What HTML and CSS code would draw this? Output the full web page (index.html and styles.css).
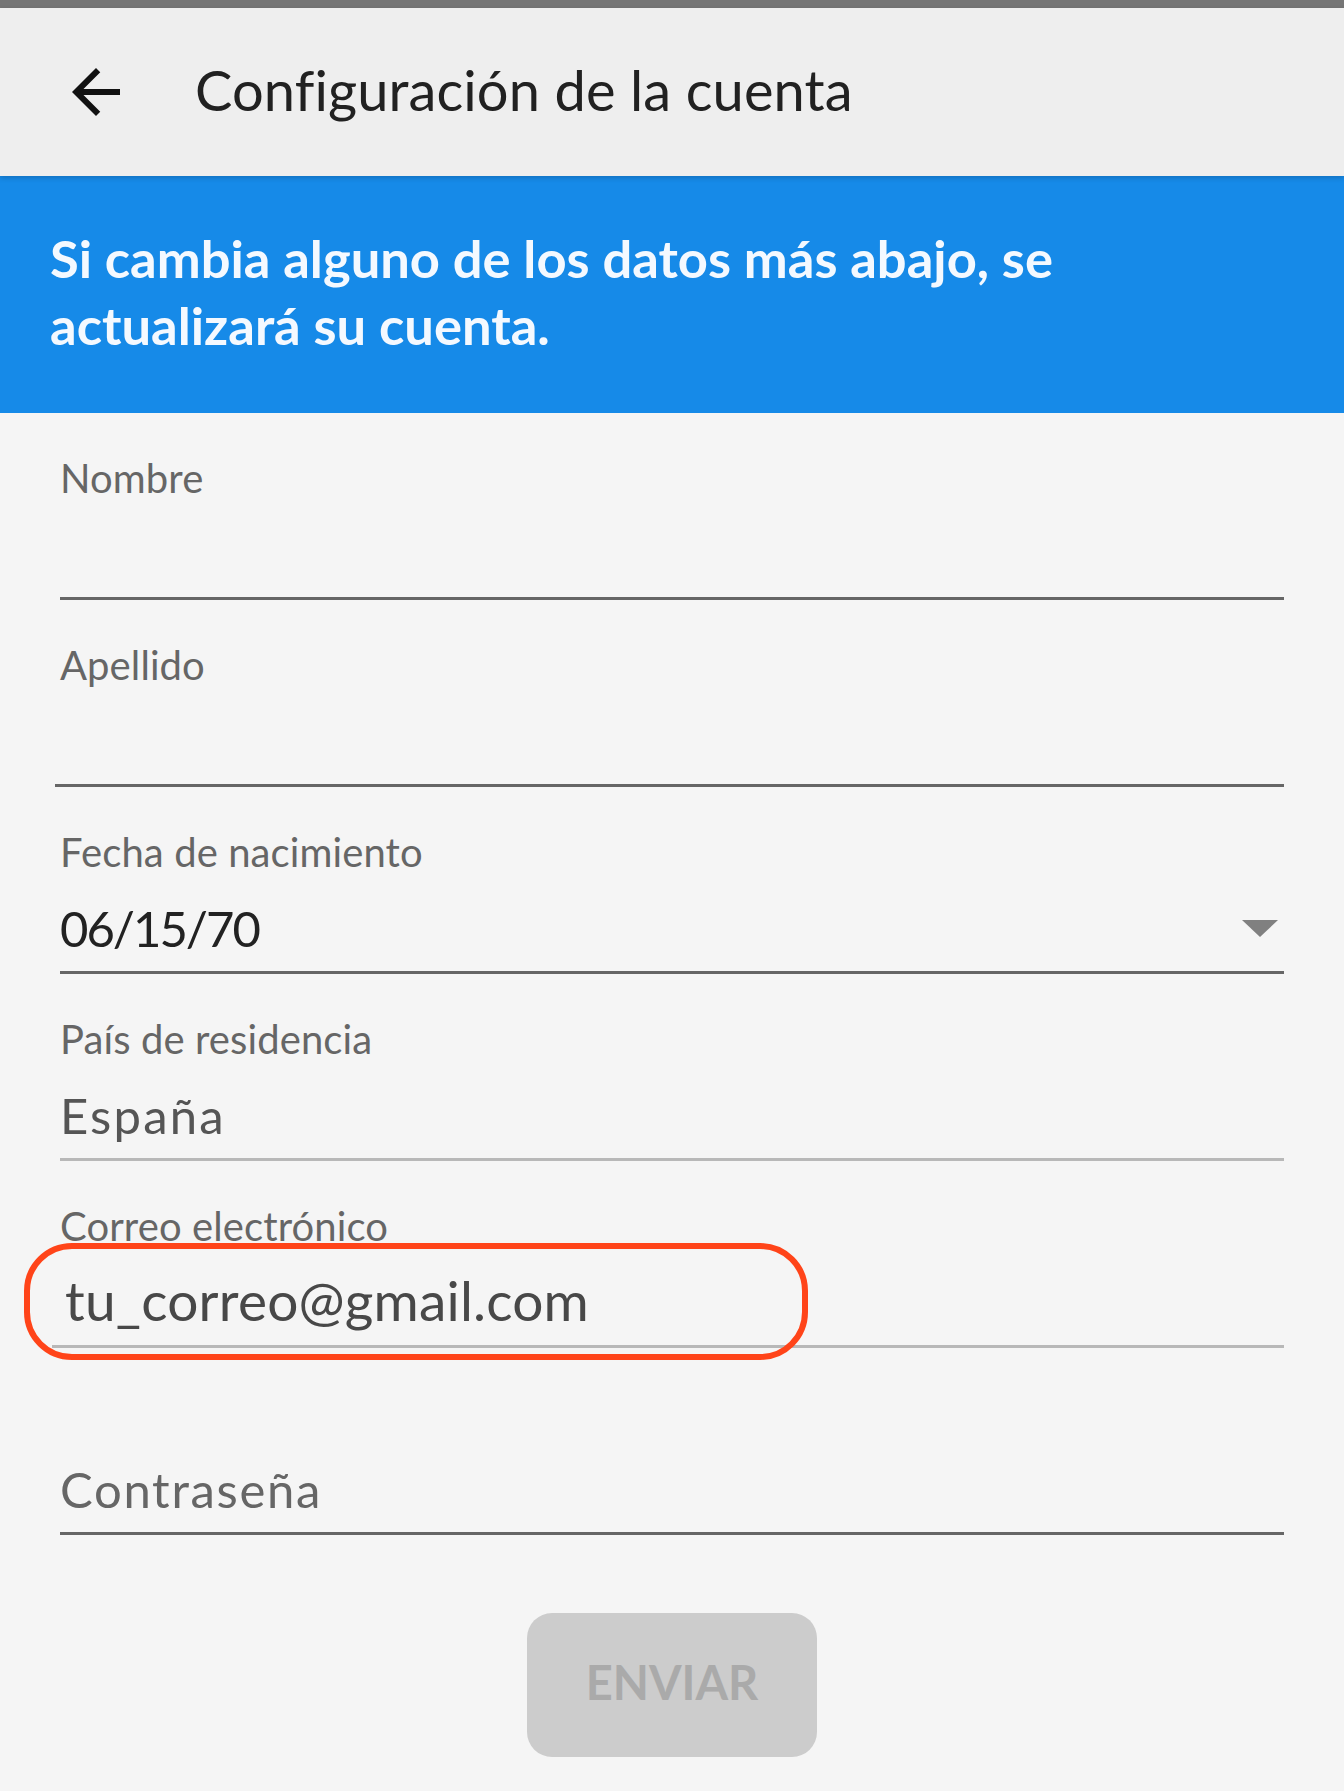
FILE: index.html
```html
<!DOCTYPE html>
<html lang="es">
<head>
  <meta charset="UTF-8">
  <meta name="viewport" content="width=device-width, initial-scale=1.0">
  <title>Configuración de la cuenta</title>
  <link rel="stylesheet" href="styles.css">
</head>
<body>

  <div class="status-strip"></div>

  <div class="app-bar">
    <a href="#" class="back-btn" aria-label="Volver">
      <svg viewBox="0 0 24 24" width="72" height="72">
        <path d="M20 11H7.83l5.59-5.59L12 4l-8 8 8 8 1.41-1.41L7.83 13H20v-2z"/>
      </svg>
    </a>
    <h1 class="app-title">Configuración de la cuenta</h1>
  </div>

  <div class="notice">
    Si cambia alguno de los datos más abajo, se actualizará su cuenta.
  </div>

  <form class="account-form">
    <div class="field">
      <label class="field-label">Nombre</label>
      <div class="field-value"></div>
    </div>

    <div class="field field--wide">
      <label class="field-label">Apellido</label>
      <div class="field-value"></div>
    </div>

    <div class="field">
      <label class="field-label">Fecha de nacimiento</label>
      <div class="field-value field-value--date">
        <span class="date-text">06/15/70</span>
        <span class="dropdown-arrow"></span>
      </div>
    </div>

    <div class="field field--light">
      <label class="field-label">País de residencia</label>
      <div class="field-value field-value--muted">España</div>
    </div>

    <div class="field field--light field--email">
      <label class="field-label">Correo electrónico</label>
      <div class="field-value field-value--email">tu_correo@gmail.com</div>
      <!-- highlight drawn around the email -->
      <div class="highlight"></div>
    </div>

    <div class="field">
      <label class="field-label">&nbsp;</label>
      <div class="field-value field-value--placeholder">Contraseña</div>
    </div>

    <div class="actions">
      <button type="button" class="send-btn" disabled>ENVIAR</button>
    </div>
  </form>

</body>
</html>
```

FILE: styles.css
```css
html {
  background: #f5f5f5;
}

body {
  margin: 0;
  font-family: Lato, "Noto Sans", sans-serif;
  background: #f5f5f5;
  color: #222;
}

.status-strip {
  height: 8px;
  background: #757575;
}

/* Top bar */
.app-bar {
  height: 168px;
  display: flex;
  align-items: center;
  background: #eeeeee;
  position: relative;
  z-index: 1;
  box-shadow: 0 2px 5px rgba(0, 0, 0, 0.18);
}

.back-btn {
  display: flex;
  margin-left: 60px;
  width: 72px;
  height: 72px;
}

.back-btn svg {
  fill: #111;
}

.app-title {
  margin: 0 0 5px 63px;
  font-size: 56px;
  font-weight: 400;
  color: #212121;
  letter-spacing: 0.1px;
}

/* Blue info banner */
.notice {
  background: #168ae8;
  color: #f4f9ff;
  font-weight: 700;
  font-size: 52.5px;
  line-height: 67px;
  padding: 48px 60px 55px 50px;
}

/* Form fields */
.account-form {
  padding: 0 60px;
}

.field {
  position: relative;
  padding-top: 41px;
  padding-bottom: 13px;
  border-bottom: 3px solid #666;
}

.field--wide {
  margin-left: -5px;
  padding-left: 5px;
}

.field--light {
  border-bottom-color: #b8b8b8;
}

.field--email {
  margin-left: -8px;
  padding-left: 8px;
}

.field-label {
  display: block;
  font-size: 40px;
  line-height: 48px;
  color: #666;
  margin-bottom: 22px;
  letter-spacing: 0.1px;
}

.field-value {
  height: 60px;
  font-size: 49px;
  line-height: 60px;
  color: #222;
}

.field-value--date {
  display: flex;
  justify-content: space-between;
  align-items: center;
}

.date-text {
  letter-spacing: -2px;
}

.dropdown-arrow {
  width: 0;
  height: 0;
  margin-right: 6px;
  border-left: 18px solid transparent;
  border-right: 18px solid transparent;
  border-top: 17px solid #808080;
}

.field-value--muted {
  color: #555;
  letter-spacing: 2.2px;
}

.field-value--email {
  font-size: 55px;
  line-height: 56px;
  height: 56px;
  margin-bottom: 4px;
  color: #484848;
  padding-left: 5px;
  letter-spacing: 0.2px;
}

.field-value--placeholder {
  color: #666;
  letter-spacing: 1.7px;
}

.highlight {
  position: absolute;
  left: -28px;
  top: 82px;
  width: 784px;
  height: 117px;
  box-sizing: border-box;
  border: 6px solid #ff4419;
  border-radius: 48px;
}

.actions {
  display: flex;
  justify-content: center;
  padding-top: 78px;
}

.send-btn {
  width: 290px;
  height: 144px;
  border: none;
  border-radius: 25px;
  background: #cccccc;
  color: #aaaaaa;
  font-family: Lato, "Noto Sans", sans-serif;
  font-weight: 700;
  font-size: 47px;
  padding: 0 0 7px;
}
```
